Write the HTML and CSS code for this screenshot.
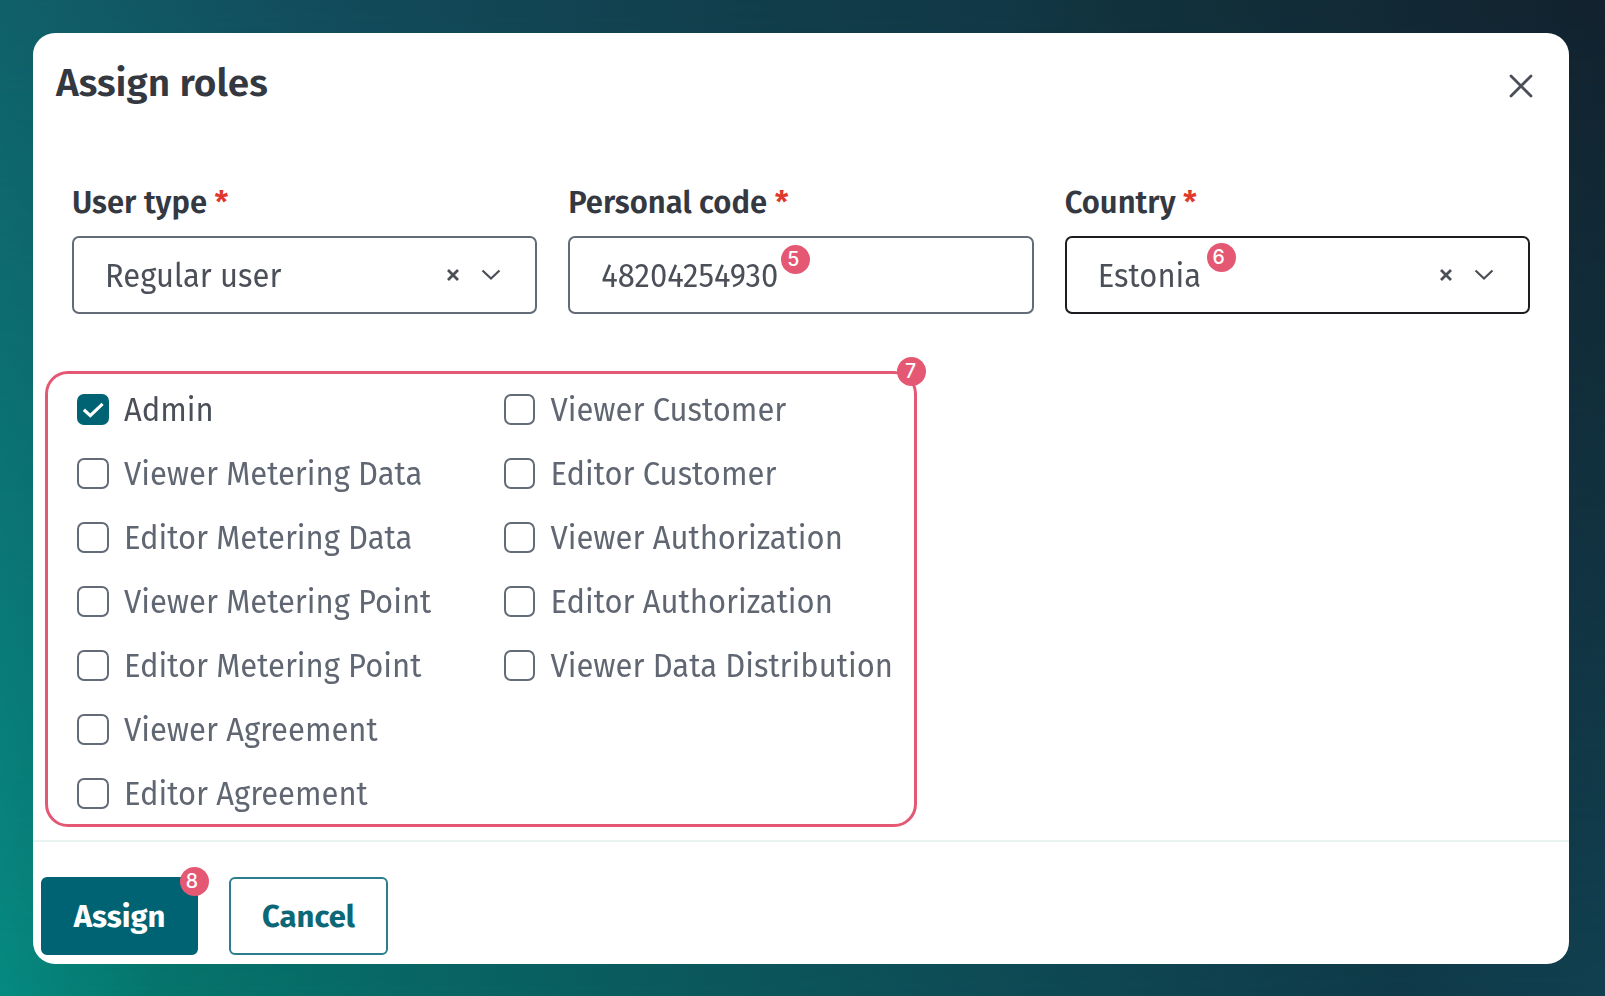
FILE: index.html
```
<!DOCTYPE html>
<html lang="en">
<head>
<meta charset="utf-8">
<title>Assign roles</title>
<link rel="stylesheet" href="styles.css">
</head>
<body>
<main class="dialog">
  <header class="head">
    <h1 class="title">Assign roles</h1>
    <svg class="close" viewBox="0 0 24 24"><path d="M2 2 22 22M22 2 2 22"/></svg>
  </header>
  <section class="fields">
    <div class="field">
      <div class="label">User type <span class="req">*</span></div>
      <div class="input"><span class="value">Regular user</span>
        <svg class="clear" viewBox="0 0 14 14"><path d="M2 2 12 12M12 2 2 12"/></svg>
        <svg class="chev" viewBox="0 0 20 12"><path d="M1.5 1.5 10 9.5 18.5 1.5"/></svg></div>
    </div>
    <div class="field">
      <div class="label">Personal code <span class="req">*</span></div>
      <div class="input"><span class="value">48204254930</span></div>
      <span class="badge b5">5</span>
    </div>
    <div class="field">
      <div class="label">Country <span class="req">*</span></div>
      <div class="input focus"><span class="value">Estonia</span>
        <svg class="clear" viewBox="0 0 14 14"><path d="M2 2 12 12M12 2 2 12"/></svg>
        <svg class="chev" viewBox="0 0 20 12"><path d="M1.5 1.5 10 9.5 18.5 1.5"/></svg></div>
      <span class="badge b6">6</span>
    </div>
  </section>
  <section class="roles">
    <div class="col">
      <div class="role on"><span class="box"><svg viewBox="0 0 32 32"><path d="M7 16 13.5 22 26 10"/></svg></span><span class="name">Admin</span></div>
      <div class="role"><span class="box"></span><span class="name">Viewer Metering Data</span></div>
      <div class="role"><span class="box"></span><span class="name">Editor Metering Data</span></div>
      <div class="role"><span class="box"></span><span class="name">Viewer Metering Point</span></div>
      <div class="role"><span class="box"></span><span class="name">Editor Metering Point</span></div>
      <div class="role"><span class="box"></span><span class="name">Viewer Agreement</span></div>
      <div class="role"><span class="box"></span><span class="name">Editor Agreement</span></div>
    </div>
    <div class="col">
      <div class="role"><span class="box"></span><span class="name">Viewer Customer</span></div>
      <div class="role"><span class="box"></span><span class="name">Editor Customer</span></div>
      <div class="role"><span class="box"></span><span class="name">Viewer Authorization</span></div>
      <div class="role"><span class="box"></span><span class="name">Editor Authorization</span></div>
      <div class="role"><span class="box"></span><span class="name">Viewer Data Distribution</span></div>
    </div>
    <span class="badge b7">7</span>
  </section>
  <footer class="foot">
    <div class="btn primary">Assign<span class="badge b8">8</span></div>
    <div class="btn">Cancel</div>
  </footer>
</main>
</body>
</html>
```
FILE: styles.css
```
* { box-sizing: border-box; }
body {
  position: relative;
  margin: 0;
  width: 1605px;
  height: 996px;
  padding: 33px 36px 32px 33px;
  overflow: hidden;
  font-family: "Fira Sans", "Noto Sans", sans-serif;
  color: #343841;
  background: linear-gradient(90deg, #068a80 0%, #06756c 10%, #0a5f60 35%, #0e4d56 60%, #103a49 87%, #114050 100%);
}
/* darker upper half of the backdrop, fading out downwards */
body::before {
  content: "";
  position: absolute;
  inset: 0;
  background: linear-gradient(90deg, #10606a 0%, #124a5a 22%, #113c49 50%, #113847 62%, #11323c 70%, #12222e 100%);
  mask-image: linear-gradient(#000, transparent);
}
.dialog {
  position: relative;
  display: flex;
  flex-direction: column;
  height: 931px;
  border-radius: 22px;
  background: #fff;
}
.head {
  display: flex;
  justify-content: space-between;
  height: 148px;
  padding: 22px 36px 0 23px;
}
.title { margin: 0; font-size: 38.8px; font-weight: 600; line-height: 57px; }
svg { fill: none; stroke: #4a4e57; overflow: visible; }
.close { width: 24px; height: 24px; margin-top: 19px; stroke-width: 2.8; stroke-linecap: round; }
.fields { display: flex; gap: 31px; padding: 0 39px; }
.field { position: relative; flex: 1; }
.label { height: 55px; font-size: 31px; font-weight: 600; line-height: 44px; white-space: nowrap; }
.req { color: #e0382c; }
.input {
  display: flex;
  align-items: center;
  height: 78px;
  padding: 0 34px 0 31px;
  border: 2px solid #636b78;
  border-radius: 7px;
  color: #4b4f58;
  font-size: 31px;
}
.focus { border-color: #1c1d20; }
.value { flex: 1; white-space: nowrap; transform: scaleY(1.06); }
.clear { width: 14px; height: 14px; margin-right: 21px; stroke-width: 2.8; }
.chev { width: 20px; height: 12px; stroke-width: 2.2; }
.roles {
  position: relative;
  display: flex;
  width: 872px;
  height: 456px;
  margin: 57px 0 0 12px;
  padding: 3.5px 0 0 29px;
  border: 3px solid #e55874;
  border-radius: 23px;
}
.col { width: 426.5px; flex: none; }
.role {
  display: flex;
  align-items: center;
  gap: 15.5px;
  height: 64px;
  color: #606773;
  font-size: 31px;
  white-space: nowrap;
}
.name { transform: scaleY(1.06); }
.on { color: #4b4f58; }
.box { width: 31.5px; height: 31px; border: 2px solid #636b78; border-radius: 7px; }
.on .box { border: 0; background: #006373; }
.box svg { display: block; stroke: #fff; stroke-width: 3.2; }
.foot {
  display: flex;
  gap: 31px;
  margin-top: 13px;
  padding: 35px 0 0 8px;
  border-top: 2px solid #e8f3f2;
}
.btn {
  position: relative;
  width: 159px;
  height: 78px;
  border: 2px solid #2c7e8a;
  border-radius: 6px;
  color: #0c6877;
  font-size: 31px;
  font-weight: 700;
  line-height: 76px;
  text-align: center;
}
.primary { width: 157px; border-color: #006373; background: #006373; color: #fff; }
.badge {
  position: absolute;
  width: 29px;
  height: 29px;
  padding-right: 5px;
  border-radius: 50%;
  background: #e55874;
  color: #fff;
  font: 500 19.5px/29px Inter, sans-serif;
  text-align: center;
}
.b5 { left: 213px; top: 64px; }
.b6 { left: 142px; top: 62px; }
.b7 { right: -12px; top: -17px; padding-right: 2px; }
.b8 { right: -13px; top: -12px; }
```
